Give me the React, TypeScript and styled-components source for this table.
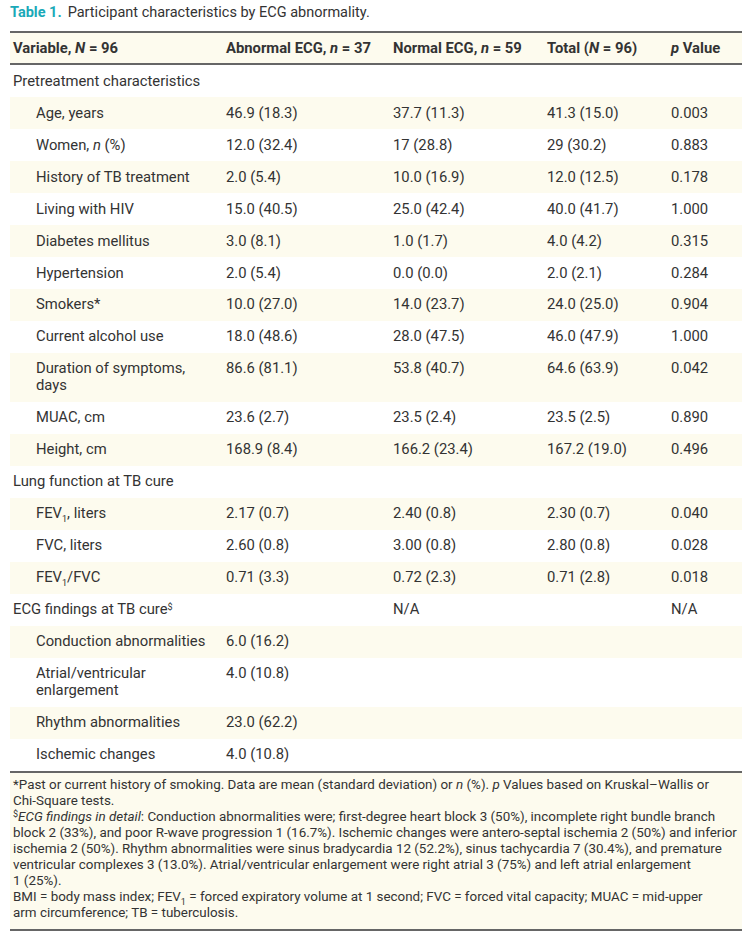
import React from "react"
import styled, { createGlobalStyle } from "styled-components"

const Global = createGlobalStyle`
  body {
    margin: 0;
    background: #fff;
    font-family: Roboto, "Liberation Sans", sans-serif;
    color: #333;
  }
`

const Wrap = styled.div`
  padding: 4px 10px 0 10px;
`

const Caption = styled.div`
  font-size: 14.5px;
  line-height: 18px;
  margin-bottom: 9px;
  color: #333;

  b {
    color: #1aa9b8;
    margin-right: 6px;
  }
`

const Table = styled.table`
  width: 100%;
  border-collapse: collapse;
  table-layout: fixed;
  font-size: 14.8px;
  line-height: 17px;
  border-top: 2px solid #666;
  border-bottom: 2px solid #666;
`

const HeadRow = styled.tr`
  background: #fdfbee;
  border-bottom: 2px solid #666;
`

const Th = styled.th`
  text-align: left;
  font-weight: 700;
  padding: 7px 3px 6px 3px;
  color: #333;
`

const Row = styled.tr<{ $shade?: boolean }>`
  background: ${p => (p.$shade ? "#fdfbee" : "#fff")};
`

const Td = styled.td<{ $indent?: boolean }>`
  padding: 7.6px 3px 7.4px 3px;
  padding-left: ${p => (p.$indent ? "26px" : "3px")};
  vertical-align: top;
`

const LabelTd = styled(Td)`
  padding-right: 8px;
`

const Small = styled.sub`
  font-size: 9px;
  line-height: 0;
`

const Mark = styled.span`
  font-size: 9px;
  line-height: 0;
  vertical-align: 4px;
`

const Notes = styled.div`
  background: #fdfbee;
  border-bottom: 2px solid #666;
  padding: 4px 2px 8px 3px;
  font-size: 13.4px;
  line-height: 16px;
  color: #333;

  p {
    margin: 0;
  }
`

const Keep = styled.span`
  white-space: nowrap;
`

type Line = {
  label: React.ReactNode
  cells?: string[]
  group?: boolean
}

const lines: Line[] = [
  { label: "Pretreatment characteristics", group: true },
  { label: "Age, years", cells: ["46.9 (18.3)", "37.7 (11.3)", "41.3 (15.0)", "0.003"] },
  { label: <>Women, <i>n</i> (%)</>, cells: ["12.0 (32.4)", "17 (28.8)", "29 (30.2)", "0.883"] },
  { label: "History of TB treatment", cells: ["2.0 (5.4)", "10.0 (16.9)", "12.0 (12.5)", "0.178"] },
  { label: "Living with HIV", cells: ["15.0 (40.5)", "25.0 (42.4)", "40.0 (41.7)", "1.000"] },
  { label: "Diabetes mellitus", cells: ["3.0 (8.1)", "1.0 (1.7)", "4.0 (4.2)", "0.315"] },
  { label: "Hypertension", cells: ["2.0 (5.4)", "0.0 (0.0)", "2.0 (2.1)", "0.284"] },
  { label: "Smokers*", cells: ["10.0 (27.0)", "14.0 (23.7)", "24.0 (25.0)", "0.904"] },
  { label: "Current alcohol use", cells: ["18.0 (48.6)", "28.0 (47.5)", "46.0 (47.9)", "1.000"] },
  { label: "Duration of symptoms, days", cells: ["86.6 (81.1)", "53.8 (40.7)", "64.6 (63.9)", "0.042"] },
  { label: "MUAC, cm", cells: ["23.6 (2.7)", "23.5 (2.4)", "23.5 (2.5)", "0.890"] },
  { label: "Height, cm", cells: ["168.9 (8.4)", "166.2 (23.4)", "167.2 (19.0)", "0.496"] },
  { label: "Lung function at TB cure", group: true },
  { label: <>FEV<Small>1</Small>, liters</>, cells: ["2.17 (0.7)", "2.40 (0.8)", "2.30 (0.7)", "0.040"] },
  { label: "FVC, liters", cells: ["2.60 (0.8)", "3.00 (0.8)", "2.80 (0.8)", "0.028"] },
  { label: <>FEV<Small>1</Small>/FVC</>, cells: ["0.71 (3.3)", "0.72 (2.3)", "0.71 (2.8)", "0.018"] },
  { label: <>ECG findings at TB cure<Mark>$</Mark></>, group: true, cells: ["", "N/A", "", "N/A"] },
  { label: "Conduction abnormalities", cells: ["6.0 (16.2)", "", "", ""] },
  { label: "Atrial/ventricular enlargement", cells: ["4.0 (10.8)", "", "", ""] },
  { label: "Rhythm abnormalities", cells: ["23.0 (62.2)", "", "", ""] },
  { label: "Ischemic changes", cells: ["4.0 (10.8)", "", "", ""] },
]

export default function App() {
  return (
    <Wrap>
      <Global />
      <Caption>
        <b>Table 1.</b>Participant characteristics by ECG abnormality.
      </Caption>
      <Table>
        <colgroup>
          <col style={{ width: 213 }} />
          <col style={{ width: 167 }} />
          <col style={{ width: 154 }} />
          <col style={{ width: 124 }} />
          <col style={{ width: 74 }} />
        </colgroup>
        <thead>
          <HeadRow>
            <Th>Variable, <i>N</i> = 96</Th>
            <Th>Abnormal ECG, <i>n</i> = 37</Th>
            <Th>Normal ECG, <i>n</i> = 59</Th>
            <Th>Total (<i>N</i> = 96)</Th>
            <Th><i>p</i> Value</Th>
          </HeadRow>
        </thead>
        <tbody>
          {lines.map((l, i) => (
            <Row key={i} $shade={i % 2 === 1}>
              <LabelTd $indent={!l.group}>{l.label}</LabelTd>
              {(l.cells ?? ["", "", "", ""]).map((c, j) => (
                <Td key={j}>{c}</Td>
              ))}
            </Row>
          ))}
        </tbody>
      </Table>
      <Notes>
        <p>
          *Past or current history of smoking. Data are mean (standard deviation) or <i>n</i> (%). <i>p</i> Values
          based on Kruskal–Wallis or <Keep>Chi-Square</Keep> tests.
        </p>
        <p>
          <Mark>$</Mark>
          <i>ECG findings in detail</i>: Conduction abnormalities were; first-degree heart block 3 (50%), incomplete
          right bundle branch block 2 (33%), and poor R-wave progression 1 (16.7%). Ischemic changes were
          antero-septal ischemia 2 (50%) and inferior ischemia 2 (50%). Rhythm abnormalities were sinus bradycardia
          12 (52.2%), sinus tachycardia 7 (30.4%), and premature ventricular complexes 3 (13.0%). Atrial/ventricular
          enlargement were right atrial 3 (75%) and left atrial enlargement <Keep>1 (25%).</Keep>
        </p>
        <p>
          BMI = body mass index; FEV<Small>1</Small> = forced expiratory volume at 1 second; FVC = forced vital
          capacity; MUAC = mid-upper <Keep>arm circumference</Keep>; TB = tuberculosis.
        </p>
      </Notes>
    </Wrap>
  )
}
